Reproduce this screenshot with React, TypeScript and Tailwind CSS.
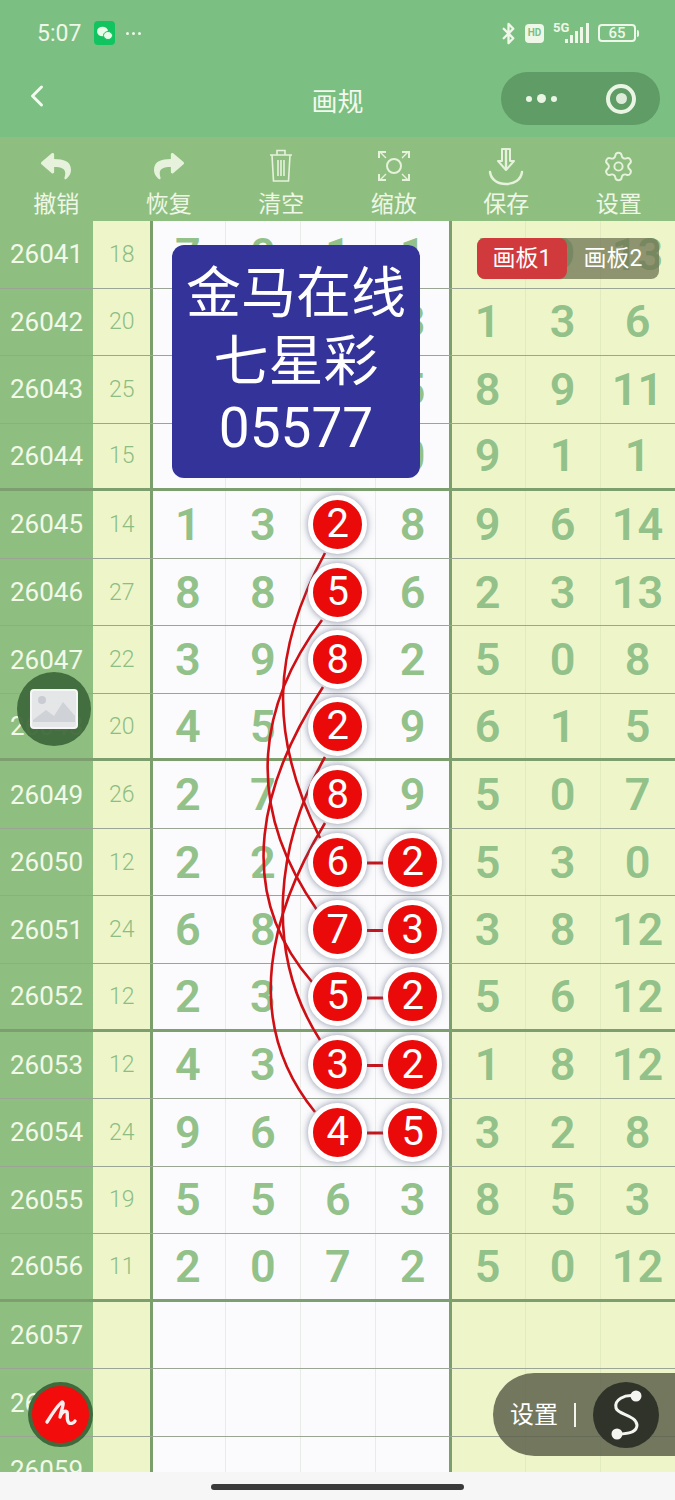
import React from "react";
import { Bluetooth, ChevronLeft, Settings } from "lucide-react";
import { FaReply, FaShare } from "react-icons/fa";

type Row = { id: string; sum: string; a: string[]; b: string[]; balls?: number[] };

const rows: Row[] = [
  { id: "26041", sum: "18", a: ["7", "0", "1", "1"], b: ["5", "9", "13"] },
  { id: "26042", sum: "20", a: ["4", "6", "2", "3"], b: ["1", "3", "6"] },
  { id: "26043", sum: "25", a: ["1", "2", "7", "5"], b: ["8", "9", "11"] },
  { id: "26044", sum: "15", a: ["3", "8", "4", "0"], b: ["9", "1", "1"] },
  { id: "26045", sum: "14", a: ["1", "3", "2", "8"], b: ["9", "6", "14"], balls: [2] },
  { id: "26046", sum: "27", a: ["8", "8", "5", "6"], b: ["2", "3", "13"], balls: [2] },
  { id: "26047", sum: "22", a: ["3", "9", "8", "2"], b: ["5", "0", "8"], balls: [2] },
  { id: "26048", sum: "20", a: ["4", "5", "2", "9"], b: ["6", "1", "5"], balls: [2] },
  { id: "26049", sum: "26", a: ["2", "7", "8", "9"], b: ["5", "0", "7"], balls: [2] },
  { id: "26050", sum: "12", a: ["2", "2", "6", "2"], b: ["5", "3", "0"], balls: [2, 3] },
  { id: "26051", sum: "24", a: ["6", "8", "7", "3"], b: ["3", "8", "12"], balls: [2, 3] },
  { id: "26052", sum: "12", a: ["2", "3", "5", "2"], b: ["5", "6", "12"], balls: [2, 3] },
  { id: "26053", sum: "12", a: ["4", "3", "3", "2"], b: ["1", "8", "12"], balls: [2, 3] },
  { id: "26054", sum: "24", a: ["9", "6", "4", "5"], b: ["3", "2", "8"], balls: [2, 3] },
  { id: "26055", sum: "19", a: ["5", "5", "6", "3"], b: ["8", "5", "3"] },
  { id: "26056", sum: "11", a: ["2", "0", "7", "2"], b: ["5", "0", "12"] },
  { id: "26057", sum: "", a: ["", "", "", ""], b: ["", "", ""] },
  { id: "26058", sum: "", a: ["", "", "", ""], b: ["", "", ""] },
  { id: "26059", sum: "", a: ["", "", "", ""], b: ["", "", ""] },
];

const curves = [
  "M325 553 C272 650 268 735 320 838",
  "M322 620 C262 700 240 800 317 910",
  "M323 687 C262 780 232 890 312 982",
  "M325 757 C278 840 262 950 320 1040",
  "M325 823 C272 910 240 1020 315 1112",
];

const dashes = [863, 930.5, 998, 1065.5, 1133];

function TrashIcon() {
  return (
    <svg width="30" height="38" viewBox="0 0 30 38" fill="none" stroke="#e6f2dc" strokeWidth="1.6">
      <path d="M4 8h22M11 8V3.5h8V8M6 8l1.5 26h15L24 8" />
      <path d="M12 13v16M15 13v16M18 13v16" />
    </svg>
  );
}

function FocusIcon() {
  return (
    <svg width="34" height="34" viewBox="0 0 34 34" fill="none" stroke="#e6f2dc" strokeWidth="2">
      <path d="M2 9V3h7M25 3h7v6M2 25v6h7M25 31h7v-6" />
      <path d="M3 3l6 6M31 3l-6 6M3 31l6-6M31 31l-6-6" strokeWidth="1.4" />
      <circle cx="17" cy="17" r="7" />
    </svg>
  );
}

function SaveIcon() {
  return (
    <svg width="36" height="40" viewBox="0 0 36 40" fill="none" stroke="#e6f2dc" strokeWidth="2.4">
      <path d="M18 2v21" />
      <path d="M10 15h4V3h8v12h4l-8 9z" strokeWidth="2" strokeLinejoin="round" />
      <path d="M2 26c1 8 8 12 16 12s15-4 16-12" strokeLinecap="round" />
    </svg>
  );
}

function Tool({ icon, label }: { icon: React.ReactNode; label: string }) {
  return (
    <div className="flex w-[112.5px] flex-col items-center">
      <div className="flex h-[42px] items-center justify-center">{icon}</div>
      <div className="mt-[3px] text-[23px] leading-[30px] text-[#eef7e6]">{label}</div>
    </div>
  );
}

function Ball({ n }: { n: string }) {
  return (
    <div className="relative z-20 flex h-[59px] w-[59px] items-center justify-center rounded-full border-[5px] border-white bg-[#ea0a0a] text-[40px] leading-none text-white shadow-[0_0_7px_rgba(90,100,130,0.7)]">
      {n}
    </div>
  );
}

function Digit({ v }: { v: string }) {
  return <span className="text-[45px] font-semibold leading-none text-[#93c18a]">{v}</span>;
}

export default function App() {
  return (
    <div
      className="relative h-[1500px] w-[675px] overflow-hidden bg-[#f6f6f6]"
      style={{ fontFamily: 'Roboto, "Noto Sans CJK SC", sans-serif' }}
    >
      {/* status bar */}
      <div className="flex h-[66px] items-center justify-between bg-[#7cbf83] pl-[37px] pr-[36px] text-[#eef7e8]">
        <div className="flex items-center">
          <span className="text-[23px] leading-none">5:07</span>
          <span className="ml-[13px] flex h-[24px] w-[21px] items-center justify-center rounded-[4px] bg-[#12c45f]">
            <svg width="17" height="15" viewBox="0 0 17 15" fill="#eafbe8">
              <ellipse cx="6.5" cy="5.5" rx="5.5" ry="4.8" />
              <ellipse cx="12" cy="9.5" rx="4.5" ry="4" stroke="#12c45f" strokeWidth="1" />
            </svg>
          </span>
          <span className="ml-[11px] flex gap-[3px]">
            <i className="h-[3px] w-[3px] rounded-full bg-[#eef7e8]" />
            <i className="h-[3px] w-[3px] rounded-full bg-[#eef7e8]" />
            <i className="h-[3px] w-[3px] rounded-full bg-[#eef7e8]" />
          </span>
        </div>
        <div className="flex items-center">
          <Bluetooth size={23} strokeWidth={2.4} />
          <span className="ml-[5px] flex h-[19px] w-[19px] items-center justify-center rounded-[4px] bg-[#eef7e8] text-[10px] font-bold leading-none text-[#7cbf83]">
            HD
          </span>
          <div className="relative ml-[9px] h-[24px] w-[39px]">
            <span className="absolute left-0 top-0 text-[13px] font-bold leading-none">5G</span>
            <svg className="absolute left-0 top-0" width="39" height="24" viewBox="0 0 39 24" fill="#eef7e8">
              <rect x="12" y="18" width="3" height="4" />
              <rect x="17" y="14" width="3" height="8" />
              <rect x="22" y="10" width="3" height="12" />
              <rect x="27" y="6" width="3" height="16" />
              <rect x="33" y="2" width="3" height="20" />
            </svg>
          </div>
          <div className="ml-[6px] flex h-[18px] w-[38px] items-center justify-center rounded-[4px] border-2 border-[#eef7e8] text-[15px] font-medium leading-none">
            65
          </div>
          <span className="ml-[1px] h-[7px] w-[2px] rounded-r bg-[#eef7e8]" />
        </div>
      </div>

      {/* nav bar */}
      <div className="relative flex h-[71px] items-center justify-center bg-[#7cbf83] text-[#f2f9ee]">
        <ChevronLeft className="absolute left-[19px] top-[12px]" size={36} strokeWidth={2} />
        <span className="text-[26px] leading-none">画规</span>
        <div className="absolute left-[501px] top-[6px] flex h-[53px] w-[159px] items-center rounded-full bg-[#5f9c66]">
          <div className="ml-[25px] flex items-center gap-[5px]">
            <i className="h-[6px] w-[6px] rounded-full bg-[#eaf5e4]" />
            <i className="h-[9px] w-[9px] rounded-full bg-[#eaf5e4]" />
            <i className="h-[6px] w-[6px] rounded-full bg-[#eaf5e4]" />
          </div>
          <div className="ml-auto mr-[24px] flex h-[30px] w-[30px] items-center justify-center rounded-full border-[4px] border-[#eaf5e4]">
            <i className="h-[11px] w-[11px] rounded-full bg-[#dcecd8]" />
          </div>
        </div>
      </div>

      {/* toolbar */}
      <div className="flex h-[84px] bg-[#8fbf80] pt-[8px]">
        <Tool icon={<FaReply size={30} color="#e6f2dc" />} label="撤销" />
        <Tool icon={<FaShare size={30} color="#e6f2dc" />} label="恢复" />
        <Tool icon={<TrashIcon />} label="清空" />
        <Tool icon={<FocusIcon />} label="缩放" />
        <Tool icon={<SaveIcon />} label="保存" />
        <Tool icon={<Settings size={33} strokeWidth={1.4} color="#e6f2dc" />} label="设置" />
      </div>

      {/* grid */}
      <div className="h-[1251px] overflow-hidden">
        {rows.map((r, i) => {
          const thick = (i + 1) % 4 === 0;
          const line = thick ? "border-b-[3px] border-[#7d9f70]" : "border-b-[1px] border-[#9aa596]";
          return (
            <div key={r.id} className={`flex h-[67.55px] ${line}`}>
              <div className="flex w-[93px] items-center justify-center bg-[#8fbf80] text-[26px] leading-none text-[#f2f9e8]">
                {r.id}
              </div>
              <div className="flex w-[57.5px] items-center justify-center bg-[#eef6c9] text-[23px] font-light leading-none text-[#8dbd84]">
                {r.sum}
              </div>
              {r.a.map((v, j) => (
                <div
                  key={j}
                  className={`flex w-[75px] items-center justify-center bg-[#fbfbfd] ${
                    j === 0
                      ? "shadow-[inset_3px_0_0_#7a9f6c]"
                      : j === 3
                        ? "shadow-[inset_1px_0_0_#e9ece6,inset_-1px_0_0_#7a9f6c]"
                        : "shadow-[inset_1px_0_0_#e9ece6]"
                  }`}
                >
                  {r.balls?.includes(j) ? <Ball n={v} /> : <Digit v={v} />}
                </div>
              ))}
              {r.b.map((v, j) => (
                <div
                  key={j}
                  className={`flex w-[75px] items-center justify-center bg-[#eef6c9] ${
                    j === 0 ? "shadow-[inset_2px_0_0_#7a9f6c]" : "shadow-[inset_1px_0_0_#e2ebc0]"
                  }`}
                >
                  <Digit v={v} />
                </div>
              ))}
            </div>
          );
        })}
      </div>

      {/* home indicator */}
      <div className="flex h-[28px] justify-center bg-[#f6f6f6] pt-[12px]">
        <div className="h-[6px] w-[253px] rounded-full bg-[#3a3a3a]" />
      </div>

      {/* drawn route over the grid */}
      <svg className="absolute left-0 top-0 z-10" width="675" height="1500" viewBox="0 0 675 1500" fill="none">
        {curves.map((d) => (
          <path key={d} d={d} stroke="#cf0f14" strokeWidth="2.6" />
        ))}
        {dashes.map((y) => (
          <path key={y} d={`M367 ${y}H384`} stroke="#c8141a" strokeWidth="3" />
        ))}
      </svg>

      {/* lottery card */}
      <div className="absolute left-[172px] top-[245px] z-30 flex h-[233px] w-[248px] flex-col items-center justify-center rounded-[12px] bg-[#333399] text-[55px] leading-[67.5px] text-white">
        <div>金马在线</div>
        <div>七星彩</div>
        <div>05577</div>
      </div>

      {/* board tabs */}
      <div className="absolute left-[477px] top-[238px] z-30 flex h-[41px] w-[182px] rounded-[8px] bg-[#6d7350]/75 text-[23px] leading-none text-white">
        <div className="flex w-[90px] items-center justify-center rounded-[8px] bg-[#d13a3c]">画板1</div>
        <div className="flex flex-1 items-center justify-center">画板2</div>
      </div>

      {/* photo button */}
      <div className="absolute left-[17px] top-[672px] z-40 flex h-[74px] w-[74px] items-center justify-center rounded-full bg-[#3f693b]/95">
        <svg width="48" height="40" viewBox="0 0 48 40">
          <rect x="1" y="1" width="46" height="38" rx="3" fill="#e4e6e8" stroke="#f6f6f6" strokeWidth="2" />
          <circle cx="12" cy="11" r="4" fill="#c9ccd2" />
          <path d="M3 31l13-10 8 6 9-14 12 14v6H3z" fill="#cfd2d6" />
        </svg>
      </div>

      {/* brush button */}
      <div className="absolute left-[28px] top-[1382px] z-40 flex h-[65px] w-[65px] items-center justify-center rounded-full border-[4px] border-[#3f6a3c] bg-[#f20c0c]">
        <svg width="36" height="36" viewBox="0 0 36 36" fill="none" stroke="#fbeeee" strokeWidth="3.4" strokeLinecap="round" strokeLinejoin="round">
          <path d="M4 25C9 17 15 8 19 5c3 0-1 9-2 15 1-4 5-7 7-5 1 3-1 8 2 11 2 1 5 0 6-2" />
        </svg>
      </div>

      {/* settings pill */}
      <div className="absolute left-[493px] top-[1373px] z-40 flex h-[83px] w-[182px] items-center rounded-l-[42px] bg-[#5c604b]/85 pl-[17px] text-white">
        <span className="text-[24px] leading-none">设置</span>
        <span className="ml-[16px] h-[24px] w-[2px] bg-[#f4f4ee]" />
        <div className="ml-[17px] flex h-[66px] w-[66px] items-center justify-center rounded-full bg-[#2f3329]">
          <svg width="36" height="50" viewBox="0 0 36 50" fill="none" stroke="#f4f4f0" strokeWidth="3">
            <path d="M28 6C16 4 6 10 8 18c2 7 20 7 21 17 0 7-10 9-19 9" />
            <circle cx="28" cy="6" r="4" fill="#f4f4f0" />
            <circle cx="9" cy="44" r="4" fill="#f4f4f0" />
          </svg>
        </div>
      </div>
    </div>
  );
}
